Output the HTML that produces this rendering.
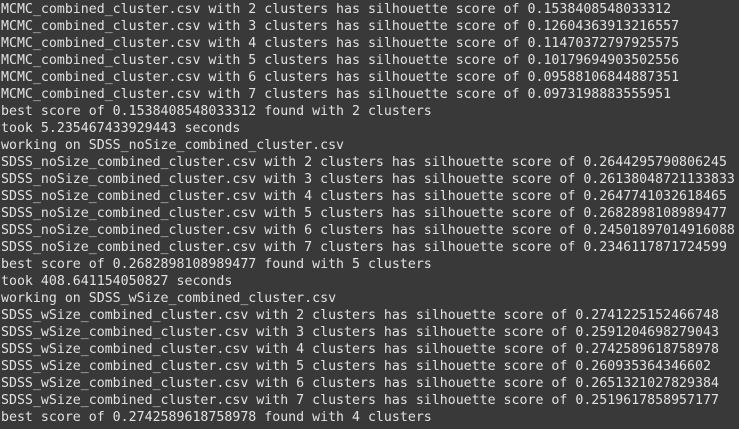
<!DOCTYPE html>
<html><head><style>
html,body{margin:0;padding:0;background:#393939;width:739px;height:429px;overflow:hidden}
pre{margin:0;padding:1px 0 0 1px;font-family:"DejaVu Sans Mono","Liberation Mono",monospace;font-size:13.25px;line-height:17px;color:#e2e2e2;white-space:pre}
</style></head><body><pre>MCMC_combined_cluster.csv with 2 clusters has silhouette score of 0.1538408548033312
MCMC_combined_cluster.csv with 3 clusters has silhouette score of 0.12604363913216557
MCMC_combined_cluster.csv with 4 clusters has silhouette score of 0.11470372797925575
MCMC_combined_cluster.csv with 5 clusters has silhouette score of 0.10179694903502556
MCMC_combined_cluster.csv with 6 clusters has silhouette score of 0.09588106844887351
MCMC_combined_cluster.csv with 7 clusters has silhouette score of 0.0973198883555951
best score of 0.1538408548033312 found with 2 clusters
took 5.235467433929443 seconds
working on SDSS_noSize_combined_cluster.csv
SDSS_noSize_combined_cluster.csv with 2 clusters has silhouette score of 0.2644295790806245
SDSS_noSize_combined_cluster.csv with 3 clusters has silhouette score of 0.26138048721133833
SDSS_noSize_combined_cluster.csv with 4 clusters has silhouette score of 0.2647741032618465
SDSS_noSize_combined_cluster.csv with 5 clusters has silhouette score of 0.2682898108989477
SDSS_noSize_combined_cluster.csv with 6 clusters has silhouette score of 0.24501897014916088
SDSS_noSize_combined_cluster.csv with 7 clusters has silhouette score of 0.2346117871724599
best score of 0.2682898108989477 found with 5 clusters
took 408.641154050827 seconds
working on SDSS_wSize_combined_cluster.csv
SDSS_wSize_combined_cluster.csv with 2 clusters has silhouette score of 0.2741225152466748
SDSS_wSize_combined_cluster.csv with 3 clusters has silhouette score of 0.2591204698279043
SDSS_wSize_combined_cluster.csv with 4 clusters has silhouette score of 0.2742589618758978
SDSS_wSize_combined_cluster.csv with 5 clusters has silhouette score of 0.260935364346602
SDSS_wSize_combined_cluster.csv with 6 clusters has silhouette score of 0.2651321027829384
SDSS_wSize_combined_cluster.csv with 7 clusters has silhouette score of 0.2519617858957177
best score of 0.2742589618758978 found with 4 clusters</pre></body></html>
